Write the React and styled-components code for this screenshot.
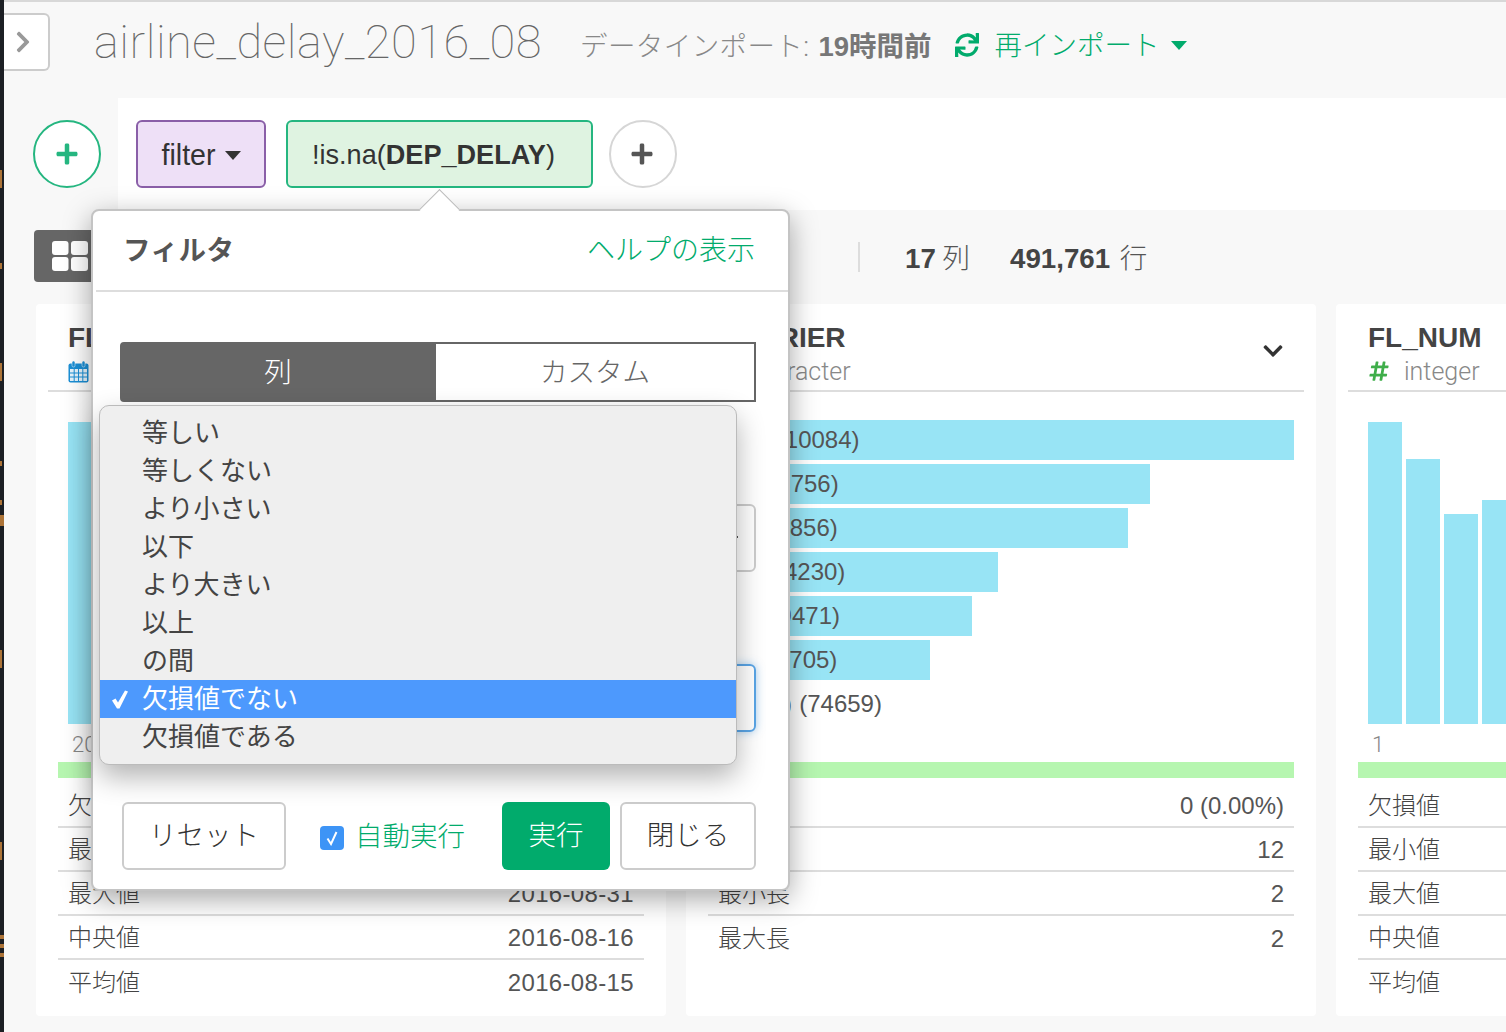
import React from 'react'
import styled, { createGlobalStyle } from 'styled-components'
import { FaPlus, FaChevronRight, FaChevronDown, FaHashtag, FaSync } from 'react-icons/fa'

const SANS = `"Liberation Sans", "Noto Sans CJK JP", sans-serif`
const LIGHT = `Roboto, "Noto Sans CJK JP", sans-serif`
const GREEN = '#01ab6c'

const carriers = [
   { label: 'WN (110084)', width: 586 },
   { label: 'AA (83756)', width: 442 },
   { label: 'DL (78856)', width: 420 },
   { label: 'OO (54230)', width: 290 },
   { label: 'EV (49471)', width: 264 },
   { label: 'B6 (41705)', width: 222 },
   { label: '他 (12) (74659)', width: 0 },
]

const dropdownItems = ['等しい', '等しくない', 'より小さい', '以下', 'より大きい', '以上', 'の間', '欠損値でない', '欠損値である']

const dateStats = [
   ['欠損値', '0 (0.00%)'],
   ['最小値', '2016-08-01'],
   ['最大値', '2016-08-31'],
   ['中央値', '2016-08-16'],
   ['平均値', '2016-08-15'],
]
const textStats = [
   ['欠損値', '0 (0.00%)'],
   ['固有値', '12'],
   ['最小長', '2'],
   ['最大長', '2'],
]
const numStats = [
   ['欠損値', '0 (0.00%)'],
   ['最小値', '1'],
   ['最大値', '7438'],
   ['中央値', '2012'],
   ['平均値', '2291'],
]

export default function App() {
   return (
      <Page>
         <GlobalStyle />
         <DockEdge>
            <svg width="4" height="1032" viewBox="0 0 4 1032">
               <g fill="#ad7438">
                  <rect y="170" width="2" height="18" />
                  <rect y="263" width="2" height="6" />
                  <rect y="363" width="2" height="18" />
                  <rect y="461" width="2" height="5" />
                  <rect y="500" width="2" height="5" />
                  <rect y="515" width="4" height="11" />
                  <rect y="650" width="2" height="18" />
                  <rect y="842" width="2" height="18" />
                  <rect y="935" width="4" height="4" />
                  <rect y="944" width="4" height="4" />
                  <rect y="953" width="4" height="4" />
               </g>
            </svg>
         </DockEdge>
         <Main>
            <Header>
               <CollapseButton><FaChevronRight /></CollapseButton>
               <Title>airline_delay_2016_08</Title>
               <ImportInfo>データインポート: <b>19時間前</b></ImportInfo>
               <Reimport>
                  <FaSync />
                  <span>再インポート</span>
                  <Caret $color={GREEN} />
               </Reimport>
            </Header>

            <StepBar>
               <StepGutter><RoundButton $color="#25b680" $nudge={0}><FaPlus /></RoundButton></StepGutter>
               <Steps>
                  <CommandPill>filter<Caret $color="#333" /></CommandPill>
                  <StepPill>!is.na(<b>DEP_DELAY</b>)</StepPill>
                  <RoundButton $color="#d6d6d6" $icon="#555" $nudge={2}><FaPlus /></RoundButton>
               </Steps>
            </StepBar>

            <SummaryBar>
               <GridButton>
                  <svg width="36" height="30" viewBox="0 0 36 30" fill="#fff">
                     <rect x="0" y="0" width="16.5" height="14" rx="3" />
                     <rect x="19" y="0" width="17" height="14" rx="3" />
                     <rect x="0" y="16" width="16.5" height="14" rx="3" />
                     <rect x="19" y="16" width="17" height="14" rx="3" />
                  </svg>
               </GridButton>
               <SummaryDivider />
               <Count><b>17</b> 列</Count>
               <Count $space={3}><b>491,761</b> 行</Count>
            </SummaryBar>

            <Cards>
               <Card>
                  <CardHeader>
                     <ColumnName>FL_DATE</ColumnName>
                     <ColumnType>
                        <CalendarIcon />
                        <span>date</span>
                     </ColumnType>
                     <Toggle><FaChevronDown /></Toggle>
                  </CardHeader>
                  <CardBody>
                     <Histogram>
                        {[302, 280, 290, 270, 260, 285, 295, 275].map((h, i) => <HistBar key={i} style={{ height: h }} />)}
                     </Histogram>
                     <AxisLabel>2016-08-01</AxisLabel>
                     <Stats rows={dateStats} spacing={0.35} />
                  </CardBody>
               </Card>

               <Card>
                  <CardHeader>
                     <ColumnName>CARRIER</ColumnName>
                     <ColumnType>
                        <TypeGlyph>A</TypeGlyph>
                        <span>character</span>
                     </ColumnType>
                     <Toggle><FaChevronDown /></Toggle>
                  </CardHeader>
                  <CardBody>
                     <BarList>
                        {carriers.map(c => (
                           <BarRow key={c.label}>
                              <BarFill style={{ width: c.width }} />
                              <BarLabel>{c.label}</BarLabel>
                           </BarRow>
                        ))}
                     </BarList>
                     <AxisLabel />
                     <Stats rows={textStats} />
                  </CardBody>
               </Card>

               <Card>
                  <CardHeader>
                     <ColumnName>FL_NUM</ColumnName>
                     <ColumnType>
                        <HashIcon><FaHashtag /></HashIcon>
                        <span>integer</span>
                     </ColumnType>
                     <Toggle><FaChevronDown /></Toggle>
                  </CardHeader>
                  <CardBody>
                     <Histogram>
                        {[302, 265, 210, 224, 180, 150].map((h, i) => <HistBar key={i} style={{ height: h }} />)}
                     </Histogram>
                     <AxisLabel>1</AxisLabel>
                     <Stats rows={numStats} />
                  </CardBody>
               </Card>
            </Cards>
         </Main>

         <Popover>
            <PopoverHeader>
               <PopoverTitle>フィルタ</PopoverTitle>
               <HelpLink>ヘルプの表示</HelpLink>
            </PopoverHeader>
            <PopoverBody>
               <Tabs>
                  <Tab $active>列</Tab>
                  <Tab>カスタム</Tab>
               </Tabs>
               <FieldBox><FieldMark /></FieldBox>
               <FieldBox $focused />
               <Footer>
                  <OutlineButton $width={164}>リセット</OutlineButton>
                  <AutoRun>
                     <CheckBox>
                        <svg width="14" height="16" viewBox="0 0 14 16" fill="none" stroke="#fff" strokeWidth="2">
                           <path d="M2.5 8.5 L6 14 L11.5 2" />
                        </svg>
                     </CheckBox>
                     <span>自動実行</span>
                  </AutoRun>
                  <RunButton>実行</RunButton>
                  <OutlineButton $width={136}>閉じる</OutlineButton>
               </Footer>
            </PopoverBody>
            <Dropdown>
               {dropdownItems.map(item => (
                  <DropdownItem key={item} $selected={item === '欠損値でない'}>
                     {item === '欠損値でない' && (
                        <CheckMark width="18" height="19" viewBox="0 0 18 19">
                           <path d="M1 10.5 L4.5 8.5 L7 12.5 L14 0.5 L17 1.5 L8.5 18.5 L6 18.5 Z" fill="#fff" />
                        </CheckMark>
                     )}
                     {item}
                  </DropdownItem>
               ))}
            </Dropdown>
         </Popover>
      </Page>
   )
}

function Stats({ rows, spacing = 0 }) {
   return (
      <>
         <GreenBar />
         {rows.map(([label, value]) => (
            <StatRow key={label}>
               <StatLabel>{label}</StatLabel>
               <StatValue $spacing={value.includes('-') ? spacing : 0}>{value}</StatValue>
            </StatRow>
         ))}
      </>
   )
}

function CalendarIcon() {
   return (
      <svg width="21" height="22" viewBox="0 0 21 22" style={{ marginRight: 15, marginTop: 2 }}>
         <rect x="0.5" y="2.5" width="20" height="19" rx="2" fill="#1b8fd6" />
         <rect x="2" y="8" width="17" height="12" fill="#e6f4fc" />
         <path d="M2 12h17M2 16h17M6.2 8v12M10.5 8v12M14.8 8v12" stroke="#1b8fd6" strokeWidth="1" />
         <rect x="4" y="0" width="3" height="6" rx="1.5" fill="#1b8fd6" stroke="#fff" strokeWidth=".5" />
         <rect x="14" y="0" width="3" height="6" rx="1.5" fill="#1b8fd6" stroke="#fff" strokeWidth=".5" />
      </svg>
   )
}

const GlobalStyle = createGlobalStyle`
   html, body {
      margin: 0;
      padding: 0;
   }
   body {
      font-family: ${SANS};
      background: #f8f8f8;
      color: #444;
   }
   * { box-sizing: border-box; }
`

const Page = styled.div`
   position: relative;
   display: flex;
   width: 1506px;
   height: 1032px;
   overflow: hidden;
   background: #f8f8f8;
`

const DockEdge = styled.div`
   flex: 0 0 4px;
   height: 1032px;
   background: #1c1f24;
   svg { display: block; }
`

const Main = styled.div`
   flex: 1;
   min-width: 0;
   display: flex;
   flex-direction: column;
   border-top: 2px solid #d8d8d8;
`

const Header = styled.div`
   height: 96px;
   display: flex;
   align-items: center;
   padding-bottom: 16px;
`

const CollapseButton = styled.div`
   flex: 0 0 46px;
   height: 58px;
   margin-right: 44px;
   display: flex;
   align-items: center;
   padding-left: 9px;
   background: #fff;
   border: 2px solid #ccc;
   border-left: none;
   border-radius: 0 6px 6px 0;
   color: #999;
   svg {
      flex: none;
      width: 20px;
      height: 24px;
   }
`

const Title = styled.h1`
   margin: 0 38px 0 0;
   font-family: ${LIGHT};
   font-weight: 100;
   font-size: 47px;
   line-height: 58px;
   letter-spacing: 0.5px;
   color: #666;
`

const ImportInfo = styled.div`
   margin-top: 4px;
   font-family: ${LIGHT};
   font-weight: 300;
   font-size: 27.5px;
   letter-spacing: 0.4px;
   color: #888;
   b {
      font-family: ${SANS};
      font-weight: 700;
      color: #777;
      margin-left: 2px;
      letter-spacing: 0;
   }
`

const Reimport = styled.div`
   margin-left: 23px;
   margin-top: 2px;
   display: flex;
   align-items: center;
   font-family: ${LIGHT};
   font-weight: 300;
   font-size: 27.5px;
   color: ${GREEN};
   svg {
      width: 24px;
      height: 24px;
      margin: 4px 16px 0 0;
   }
   i { margin: 4px 0 0 11px; }
`

const Caret = styled.i`
   display: inline-block;
   width: 0;
   height: 0;
   border-left: 8px solid transparent;
   border-right: 8px solid transparent;
   border-top: 9px solid ${p => p.$color};
   vertical-align: middle;
`

const StepBar = styled.div`
   height: 112px;
   display: flex;
`

const StepGutter = styled.div`
   flex: 0 0 114px;
   padding: 22px 0 0 29px;
`

const Steps = styled.div`
   flex: 1;
   display: flex;
   align-items: flex-start;
   padding: 22px 0 0 18px;
   background: #fff;
`

const RoundButton = styled.div`
   width: 68px;
   height: 68px;
   display: flex;
   align-items: center;
   justify-content: center;
   padding-right: ${p => p.$nudge}px;
   border-radius: 50%;
   background: #fff;
   border: 2px solid ${p => p.$color};
   color: ${p => p.$icon || p.$color};
   font-size: 24px;
`

const CommandPill = styled.div`
   width: 130px;
   height: 68px;
   margin-right: 20px;
   padding-top: 2px;
   display: flex;
   align-items: center;
   justify-content: center;
   gap: 9px;
   background: #eee0f7;
   border: 2px solid #8a5fa8;
   border-radius: 6px;
   font-size: 28.6px;
   color: #333;
`

const StepPill = styled.div`
   width: 307px;
   height: 68px;
   margin-right: 16px;
   padding: 2px 0 0 24px;
   display: flex;
   align-items: center;
   background: #dff3e1;
   border: 2px solid #25b680;
   border-radius: 6px;
   font-size: 27.1px;
   color: #333;
   white-space: pre;
`

const SummaryBar = styled.div`
   height: 94px;
   display: flex;
   align-items: center;
   padding: 0 0 2px 30px;
`

const GridButton = styled.div`
   width: 70px;
   height: 52px;
   margin-right: 754px;
   display: flex;
   align-items: center;
   padding-left: 18px;
   background: #666;
   border-radius: 4px;
`

const SummaryDivider = styled.div`
   width: 2px;
   height: 30px;
   margin: 2px 45px 0 0;
   background: #ddd;
`

const Count = styled.div`
   margin-right: 40px;
   font-family: ${LIGHT};
   font-weight: 300;
   font-size: 27.5px;
   color: #555;
   b {
      font-family: ${SANS};
      font-weight: 700;
      font-size: 27.7px;
      color: #444;
      margin-right: ${p => p.$space || 0}px;
   }
`

const Cards = styled.div`
   display: flex;
   gap: 20px;
   padding-left: 32px;
`

const Card = styled.section`
   flex: 0 0 630px;
   height: 712px;
   padding: 0 12px;
   background: #fff;
   border-radius: 4px;
`

const CardHeader = styled.header`
   position: relative;
   height: 88px;
   padding: 17px 0 0 20px;
   border-bottom: 2px solid #ddd;
`

const ColumnName = styled.div`
   font-size: 28px;
   font-weight: 700;
   line-height: 34px;
   color: #444;
`

const ColumnType = styled.div`
   display: flex;
   align-items: center;
   height: 32px;
   font-family: ${LIGHT};
   font-weight: 300;
   font-size: 25px;
   color: #888;
`

const TypeGlyph = styled.span`
   width: 29px;
   font-weight: 700;
   color: #e0833e;
`

const HashIcon = styled.span`
   display: flex;
   width: 36px;
   color: #3fae4a;
   svg { width: 22px; height: 22px; }
`

const Toggle = styled.div`
   position: absolute;
   right: 20px;
   top: 36px;
   color: #333;
   font-size: 22px;
`

const CardBody = styled.div`
   padding: 28px 10px 0;
`

const Histogram = styled.div`
   height: 304px;
   display: flex;
   align-items: flex-end;
   gap: 4px;
   padding-left: 10px;
`

const HistBar = styled.div`
   flex: 0 0 34px;
   background: #98e4f5;
`

const AxisLabel = styled.div`
   height: 38px;
   padding: 4px 0 0 14px;
   font-family: ${LIGHT};
   font-weight: 300;
   font-size: 22px;
   line-height: 34px;
   color: #888;
`

const BarList = styled.div`
   height: 304px;
   display: flex;
   flex-direction: column;
   gap: 4px;
`

const BarRow = styled.div`
   position: relative;
   height: 40px;
`

const BarFill = styled.div`
   position: absolute;
   left: 0;
   top: 0;
   bottom: 0;
   background: #98e4f5;
`

const BarLabel = styled.span`
   position: relative;
   display: block;
   padding-left: 10px;
   font-size: 24px;
   line-height: 40px;
   word-spacing: 0.6px;
   color: #555;
`

const GreenBar = styled.div`
   height: 16px;
   margin-bottom: 6px;
   background: #b6f6b0;
`

const StatRow = styled.div`
   height: 44px;
   display: flex;
   justify-content: space-between;
   align-items: center;
   padding: 0 10px;
   border-bottom: 2px solid #ddd;
   font-size: 24px;
   &:last-child { border-bottom: none; }
`

const StatLabel = styled.span`
   font-family: ${LIGHT};
   font-weight: 300;
   margin-bottom: 4px;
   color: #444;
`

const StatValue = styled.span`
   margin-top: 1px;
   letter-spacing: ${p => p.$spacing}px;
   color: #555;
`

const Popover = styled.div`
   position: absolute;
   left: 91px;
   top: 209px;
   width: 699px;
   height: 682px;
   background: #fff;
   border: 2px solid #c4c4c4;
   border-radius: 8px;
   box-shadow: 0 8px 28px rgba(0, 0, 0, 0.35);
   &::before {
      content: '';
      position: absolute;
      left: 332px;
      top: -16px;
      width: 28px;
      height: 28px;
      background: #fff;
      border-left: 1px solid #bbb;
      border-top: 1px solid #bbb;
      transform: rotate(45deg);
   }
`

const PopoverHeader = styled.div`
   position: relative;
   height: 81px;
   margin-left: 3px;
   padding: 0 33px 6px 28px;
   display: flex;
   align-items: center;
   justify-content: space-between;
   border-bottom: 2px solid #ddd;
`

const PopoverTitle = styled.div`
   margin-left: -1px;
   font-size: 27.5px;
   font-weight: 700;
   letter-spacing: 0.5px;
   color: #555;
`

const HelpLink = styled.a`
   font-family: ${LIGHT};
   font-weight: 300;
   font-size: 28px;
   color: ${GREEN};
`

const PopoverBody = styled.div`
   padding: 50px 32px 0 27px;
`

const Tabs = styled.div`
   display: flex;
   height: 60px;
`

const Tab = styled.div`
   flex: ${p => (p.$active ? '0 0 316px' : 1)};
   display: flex;
   align-items: center;
   justify-content: center;
   padding-bottom: 4px;
   font-family: ${LIGHT};
   font-weight: 300;
   font-size: 27.5px;
   background: ${p => (p.$active ? '#666' : '#fff')};
   color: ${p => (p.$active ? '#fff' : '#666')};
   border: 2px solid #666;
   border-left-width: ${p => (p.$active ? '2px' : 0)};
   border-radius: ${p => (p.$active ? '4px 0 0 4px' : '0')};
`

const FieldBox = styled.div`
   position: relative;
   height: 68px;
   margin-top: ${p => (p.$focused ? '92px' : '102px')};
   border: 2px solid ${p => (p.$focused ? '#5aa5e6' : '#ccc')};
   border-radius: 6px;
   box-shadow: ${p => (p.$focused ? '0 0 8px rgba(90, 165, 230, 0.5)' : 'none')};
`

const FieldMark = styled.i`
   position: absolute;
   right: 16px;
   top: 30px;
   width: 3px;
   height: 2px;
   background: #555;
`

const Footer = styled.div`
   display: flex;
   align-items: center;
   margin-top: 70px;
   padding-left: 2px;
`

const OutlineButton = styled.div`
   flex: 0 0 ${p => p.$width}px;
   height: 68px;
   display: flex;
   align-items: center;
   justify-content: center;
   padding-bottom: 6px;
   font-family: ${LIGHT};
   font-weight: 300;
   font-size: 27.5px;
   color: #333;
   background: #fff;
   border: 2px solid #ccc;
   border-radius: 6px;
`

const AutoRun = styled.label`
   display: flex;
   align-items: center;
   margin-left: 34px;
   font-family: ${LIGHT};
   font-weight: 300;
   font-size: 27.5px;
   color: ${GREEN};
   span:last-child { margin-bottom: 5px; }
`

const CheckBox = styled.span`
   width: 24px;
   height: 24px;
   margin: 4px 11px 0 0;
   display: flex;
   align-items: center;
   justify-content: center;
   background: #3d94f6;
   border-radius: 4px;
`

const RunButton = styled.div`
   width: 108px;
   height: 68px;
   margin: 0 10px 0 auto;
   display: flex;
   align-items: center;
   justify-content: center;
   padding-bottom: 6px;
   font-family: ${LIGHT};
   font-weight: 300;
   font-size: 27.5px;
   color: #fff;
   background: ${GREEN};
   border-radius: 6px;
`

const Dropdown = styled.div`
   position: absolute;
   left: 6px;
   top: 194px;
   width: 638px;
   height: 360px;
   padding-top: 8px;
   background: #efefef;
   border: 1px solid #bbb;
   border-radius: 10px;
   box-shadow: 0 12px 28px rgba(0, 0, 0, 0.3);
   overflow: hidden;
`

const DropdownItem = styled.div`
   position: relative;
   height: 38px;
   padding-left: 42px;
   font-size: 26px;
   line-height: 38px;
   color: ${p => (p.$selected ? '#fff' : '#444')};
   background: ${p => (p.$selected ? '#4d99fd' : 'transparent')};
`

const CheckMark = styled.svg`
   position: absolute;
   left: 11px;
   top: 10px;
`
